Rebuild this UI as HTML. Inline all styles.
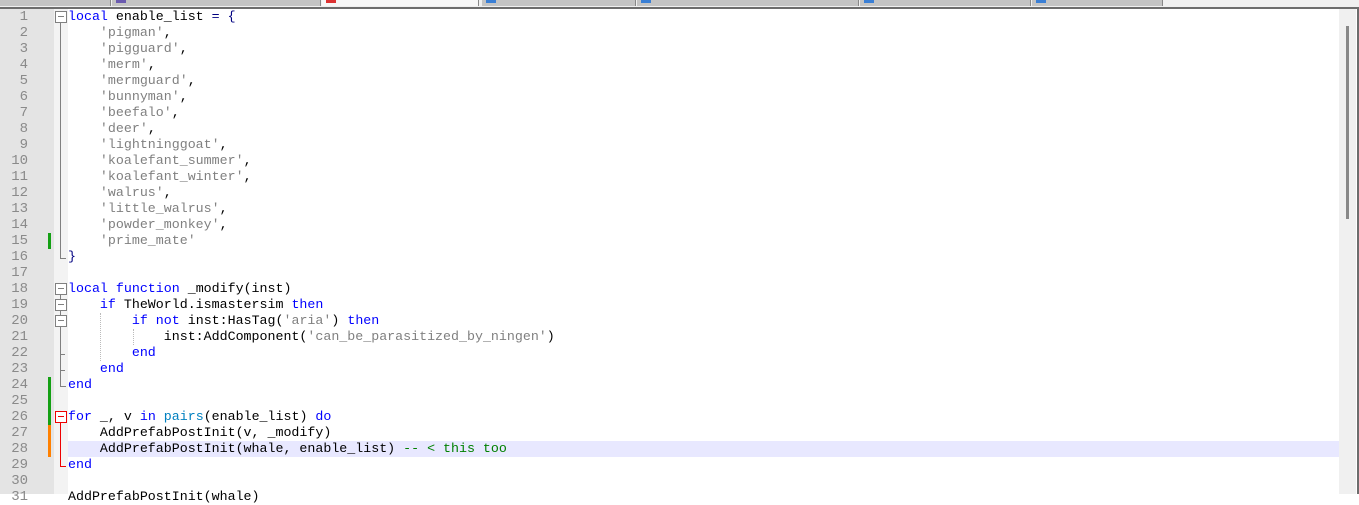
<!DOCTYPE html>
<html><head><style>
body{margin:0;width:1359px;height:494px;overflow:hidden;background:#fff;position:relative;font-family:"Liberation Mono",monospace;}
.tabs{position:absolute;left:0;top:0;width:1359px;height:7px;background:#f0f0f0;border-bottom:2px solid #6d6d6d;}
.tab{position:absolute;top:0;height:6px;background:#c4c4c4;border-right:1px solid #888;}
.tab i{position:absolute;left:4px;top:0;width:10px;height:3px;background:#3a7fd5;}
.ln{position:absolute;left:0;top:9px;width:54px;height:485px;background:#e4e4e4;}
.fold{position:absolute;left:54px;top:9px;width:14px;height:485px;background:#f3f3f3;}
.sb{position:absolute;left:1339px;top:9px;width:17px;height:485px;background:#f0f0f0;}
.thumb{position:absolute;left:1346px;top:26px;width:3px;height:193px;background:#888;}
.rb{position:absolute;left:1357px;top:7px;width:2px;height:487px;background:#6d6d6d;}
.row{position:absolute;left:0;height:16px;line-height:16px;font-size:13.3px;white-space:pre;}
.n{position:absolute;left:0;width:28px;text-align:right;color:#8a8a8a;font-size:14px;}
.c{position:absolute;left:68px;color:#000;}
.k{color:#0000ff}
.s{color:#808080}
.o{color:#000080}
.f{color:#0080c0}
.g{color:#008000}
.hl{position:absolute;left:68px;top:441px;width:1271px;height:16px;background:#e8e8ff;}
.bx{position:absolute;left:55px;width:10px;height:10px;border:1px solid #808080;background:#fff;}
.bx:after{content:"";position:absolute;left:2px;top:4px;width:6px;height:1px;background:#808080;}
.bx.r{border-color:#e00}.bx.r:after{background:#e00}
.vl{position:absolute;width:1px;background:#808080;}
.hz{position:absolute;height:1px;background:#808080;}
.ch{position:absolute;left:48px;width:3px;}
.dg{position:absolute;width:1px;border-left:1px dotted #bbb;}
</style></head><body>
<div class="tabs">
<div class="tab" style="left:0;width:110px"></div>
<div class="tab" style="left:112px;width:208px"><i style="background:#6b5bb0"></i></div>
<div class="tab" style="left:322px;width:156px;background:#f7f7f7"><i style="background:#d33"></i></div>
<div class="tab" style="left:482px;width:153px"><i></i></div>
<div class="tab" style="left:637px;width:221px"><i></i></div>
<div class="tab" style="left:860px;width:170px"><i></i></div>
<div class="tab" style="left:1032px;width:130px"><i></i></div>
</div>
<div class="ln"></div><div class="fold"></div>
<div class="hl"></div>
<div class="sb"></div><div class="thumb"></div><div class="rb"></div>

<div class="vl" style="left:60px;top:22px;height:236px"></div><div class="hz" style="left:60px;top:258px;width:6px"></div>
<div class="vl" style="left:60px;top:294px;height:92px"></div><div class="hz" style="left:60px;top:386px;width:6px"></div>
<div class="hz" style="left:60px;top:354px;width:5px"></div><div class="hz" style="left:60px;top:370px;width:5px"></div>
<div class="vl" style="left:60px;top:422px;height:44px;background:#e00"></div><div class="hz" style="left:60px;top:466px;width:6px;background:#e00"></div>
<div class="bx" style="top:11px"></div>
<div class="bx" style="top:283px"></div>
<div class="bx" style="top:299px"></div>
<div class="bx" style="top:315px"></div>
<div class="bx r" style="top:411px"></div>
<div class="dg" style="left:100px;top:313px;height:48px"></div>
<div class="dg" style="left:133px;top:329px;height:16px"></div>
<div class="ch" style="top:233px;height:16px;background:#14a014"></div>
<div class="ch" style="top:377px;height:48px;background:#14a014"></div>
<div class="ch" style="top:425px;height:32px;background:#ff8000"></div>

<div class="row" style="top:9px"><span class="n">1</span><span class="c"><span class="k">local</span> enable_list <span class="o">=</span> <span class="o">{</span></span></div>
<div class="row" style="top:25px"><span class="n">2</span><span class="c">    <span class="s">'pigman'</span>,</span></div>
<div class="row" style="top:41px"><span class="n">3</span><span class="c">    <span class="s">'pigguard'</span>,</span></div>
<div class="row" style="top:57px"><span class="n">4</span><span class="c">    <span class="s">'merm'</span>,</span></div>
<div class="row" style="top:73px"><span class="n">5</span><span class="c">    <span class="s">'mermguard'</span>,</span></div>
<div class="row" style="top:89px"><span class="n">6</span><span class="c">    <span class="s">'bunnyman'</span>,</span></div>
<div class="row" style="top:105px"><span class="n">7</span><span class="c">    <span class="s">'beefalo'</span>,</span></div>
<div class="row" style="top:121px"><span class="n">8</span><span class="c">    <span class="s">'deer'</span>,</span></div>
<div class="row" style="top:137px"><span class="n">9</span><span class="c">    <span class="s">'lightninggoat'</span>,</span></div>
<div class="row" style="top:153px"><span class="n">10</span><span class="c">    <span class="s">'koalefant_summer'</span>,</span></div>
<div class="row" style="top:169px"><span class="n">11</span><span class="c">    <span class="s">'koalefant_winter'</span>,</span></div>
<div class="row" style="top:185px"><span class="n">12</span><span class="c">    <span class="s">'walrus'</span>,</span></div>
<div class="row" style="top:201px"><span class="n">13</span><span class="c">    <span class="s">'little_walrus'</span>,</span></div>
<div class="row" style="top:217px"><span class="n">14</span><span class="c">    <span class="s">'powder_monkey'</span>,</span></div>
<div class="row" style="top:233px"><span class="n">15</span><span class="c">    <span class="s">'prime_mate'</span></span></div>
<div class="row" style="top:249px"><span class="n">16</span><span class="c"><span class="o">}</span></span></div>
<div class="row" style="top:265px"><span class="n">17</span></div>
<div class="row" style="top:281px"><span class="n">18</span><span class="c"><span class="k">local</span> <span class="k">function</span> _modify(inst)</span></div>
<div class="row" style="top:297px"><span class="n">19</span><span class="c">    <span class="k">if</span> TheWorld.ismastersim <span class="k">then</span></span></div>
<div class="row" style="top:313px"><span class="n">20</span><span class="c">        <span class="k">if</span> <span class="k">not</span> inst:HasTag(<span class="s">'aria'</span>) <span class="k">then</span></span></div>
<div class="row" style="top:329px"><span class="n">21</span><span class="c">            inst:AddComponent(<span class="s">'can_be_parasitized_by_ningen'</span>)</span></div>
<div class="row" style="top:345px"><span class="n">22</span><span class="c">        <span class="k">end</span></span></div>
<div class="row" style="top:361px"><span class="n">23</span><span class="c">    <span class="k">end</span></span></div>
<div class="row" style="top:377px"><span class="n">24</span><span class="c"><span class="k">end</span></span></div>
<div class="row" style="top:393px"><span class="n">25</span></div>
<div class="row" style="top:409px"><span class="n">26</span><span class="c"><span class="k">for</span> _, v <span class="k">in</span> <span class="f">pairs</span>(enable_list) <span class="k">do</span></span></div>
<div class="row" style="top:425px"><span class="n">27</span><span class="c">    AddPrefabPostInit(v, _modify)</span></div>
<div class="row" style="top:441px"><span class="n">28</span><span class="c">    AddPrefabPostInit(whale, enable_list) <span class="g">-- &lt; this too</span></span></div>
<div class="row" style="top:457px"><span class="n">29</span><span class="c"><span class="k">end</span></span></div>
<div class="row" style="top:473px"><span class="n">30</span></div>
<div class="row" style="top:489px"><span class="n">31</span><span class="c">AddPrefabPostInit(whale)</span></div>
</body></html>
